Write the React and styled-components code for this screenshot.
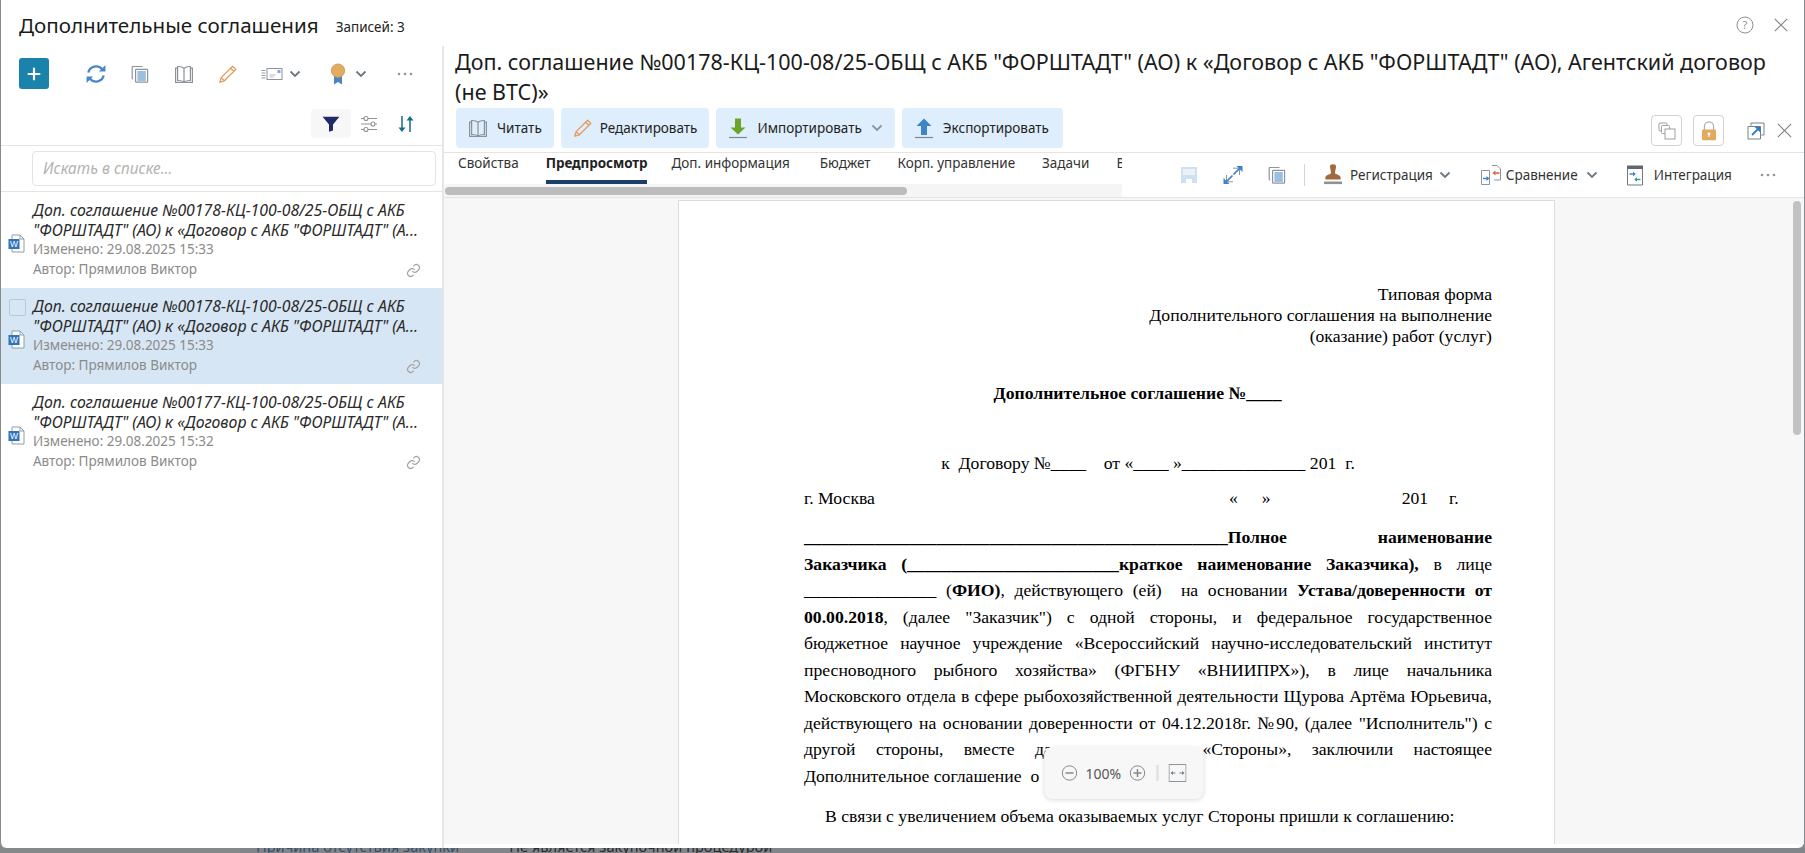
import React from "react";
import styled, { createGlobalStyle } from "styled-components";

const Global = createGlobalStyle`
  html, body { margin: 0; padding: 0; height: 853px; overflow: hidden; background: #888b8d; }
  body { font-family: "Noto Sans", "Open Sans", sans-serif; color: #1f1f1f; }
  #root { height: 853px; overflow: hidden; }
  * { box-sizing: border-box; }
`;

const Shell = styled.div`display: flex; flex-direction: column; width: 1805px; height: 853px; overflow: hidden;`;
const Modal = styled.div`
  display: flex; flex-direction: column; width: 1804px; height: 848px; flex: none;
  background: #fff; border-left: 1px solid #8a8a8a; border-radius: 0 0 6px 6px; overflow: hidden;
`;
const Backdrop = styled.div`display: grid; grid-template-columns: 240px 1fr; height: 5px; overflow: hidden; background: #868989;`;
const BackdropPanel = styled.div`
  grid-column: 2; display: flex; background: #82858a; padding-left: 16px; height: 9px; margin-top: -4px;
  font-size: 14.6px; line-height: 5px; white-space: nowrap; color: #34506a;
`;
const BackdropValue = styled.span`margin-left: 50px; color: #2c2c2c;`;

const Header = styled.header`display: flex; align-items: center; height: 46px; padding: 8px 16px 4px 18px; flex: none;`;
const ListTitle = styled.h1`margin: 0; font-size: 20.6px; font-weight: 400; color: #1b1b1b; white-space: nowrap;`;
const Count = styled.span`margin-left: 17px; padding-top: 3px; font-size: 13.5px; color: #222;`;
const HeaderTools = styled.div`margin-left: auto; display: flex; align-items: center; gap: 20px; color: #8d8f91;`;

const Body = styled.div`display: flex; flex: 1; min-height: 0;`;

const Left = styled.aside`width: 443px; flex: none; border-right: 2px solid #e6e6e6; display: flex; flex-direction: column;`;
const ToolRow = styled.div`display: flex; align-items: center; padding: 12px 0 0 18px; height: 43px;`;
const AddButton = styled.button`
  width: 30px; height: 31px; border: 0; padding: 0; border-radius: 3px; background: #1a82ab; color: #fff;
  display: flex; align-items: center; justify-content: center; margin-right: 25px;
`;
const Slot = styled.div`
  width: ${p => p.$w || 44}px; height: 30px; display: flex; align-items: center; gap: ${p => p.$gap || 0}px;
  justify-content: ${p => p.$start ? "flex-start" : "center"}; padding-left: ${p => p.$pl || 0}px; flex: none;
`;
const FilterRow = styled.div`display: flex; align-items: center; justify-content: flex-end; margin-top: 20px; padding-right: 17px; height: 29px;`;
const FilterBtn = styled.div`width: 40px; height: 29px; border-radius: 4px; background: #f7f7f7; display: flex; align-items: center; justify-content: center;`;
const SearchBar = styled.div`margin-top: 7px; border-top: 1px solid #e4e4e4; border-bottom: 1px solid #e4e4e4; padding: 5px 6px 5px 31px; height: 47px;`;
const SearchInput = styled.div`
  height: 35px; border: 1px solid #e3e3e3; border-radius: 4px; padding: 0 10px; display: flex; align-items: center;
  font-size: 15.4px; font-style: italic; color: #b3b3b3;
`;
const List = styled.div`flex: 1;`;
const Row = styled.div`
  position: relative; height: 96px; padding: 8px 0 0 32px; display: flex; flex-direction: column; white-space: nowrap;
  background: ${p => p.$active ? "#d7e6f4" : "#fff"};
`;
const RowTitle = styled.div`font-size: 15.85px; line-height: 20px; font-style: italic; color: #2a2a2a;`;
const RowMeta = styled.div`font-size: 13.5px; line-height: 19.5px; color: #8b8b8b;`;
const DocBadge = styled.div`position: absolute; left: 7px; top: 42px;`;
const LinkBadge = styled.div`position: absolute; right: 21px; bottom: 10px; color: #a6a6a6; display: flex;`;
const Check = styled.div`position: absolute; left: 8px; top: 11px; width: 17px; height: 17px; border: 1px solid #b9c8d6; border-radius: 2px;`;

const Right = styled.main`flex: 1; min-width: 0; display: flex; flex-direction: column; padding-bottom: 4px;`;
const DocTitle = styled.h2`
  margin: 0; padding: 1px 28px 1px 11px; font-size: 21.5px; line-height: 30px; font-weight: 400; color: #1b1b1b; flex: none;
`;
const Actions = styled.div`display: flex; align-items: flex-start; gap: 7px; height: 45px; padding-left: 12px; border-bottom: 1px solid #e4e4e4; flex: none;`;
const ActionBtn = styled.button`
  height: 40px; border: 0; border-radius: 4px; background: #deeefc; padding: 0 ${p => p.$pr || 14}px 0 12px;
  display: flex; align-items: center; gap: ${p => p.$gap || 9}px; font: inherit; font-size: 13.5px; color: #222; white-space: nowrap;
`;
const SideTools = styled.div`margin-left: auto; padding: 7px 5px 0 0; display: flex; align-items: center;`;
const OutlineBtn = styled.div`
  width: 31px; height: 31px; border: 1px solid #d2d2d2; border-radius: 4px; display: flex; align-items: center; justify-content: center;
  margin-right: ${p => p.$mr}px;
`;

const TabBar = styled.div`display: flex; height: 45px; border-bottom: 1px solid #e4e4e4; flex: none;`;
const TabCol = styled.div`width: 678px; flex: none;`;
const Tabs = styled.div`display: flex; gap: 27px; padding-left: 14px; height: 31px; overflow: hidden;`;
const Tab = styled.div`
  font-size: 13.5px; line-height: 21px; height: 31px; color: #333; white-space: nowrap; flex: none;
  font-weight: ${p => p.$active ? 700 : 400};
  margin-right: ${p => p.$mr || 0}px;
  ${p => p.$active ? "color:#222; border-bottom: 4px solid #1a3f6b; letter-spacing: -0.1px;" : ""}
`;
const HScroll = styled.div`height: 13px; background: #f5f5f5; padding: 3px 0 0 1px;`;
const HThumb = styled.div`width: 462px; height: 8px; border-radius: 4px; background: #bcbcbc;`;
const DocTools = styled.div`flex: 1; display: flex; align-items: center; padding-left: 45px; height: 44px; font-size: 13.5px; color: #333;`;
const Sep = styled.div`width: 1px; height: 22px; background: #d5d5d5; margin: 0 18px 0 5px;`;
const ToolText = styled.span`white-space: nowrap; margin: 0 ${p => p.$mr || 0}px 0 ${p => p.$ml || 0}px;`;

const Viewer = styled.section`position: relative; flex: 1; min-height: 0; overflow: hidden; background: #f7f7f7; padding: 2px 0 0 234px;`;
const VThumb = styled.div`position: absolute; right: 3px; top: 3px; width: 8px; height: 234px; border-radius: 4px; background: #c2c2c2;`;
const Page = styled.article`
  width: 877px; min-height: 800px; background: #fff; border: 1px solid #dcdcdc; padding: 83px 62px 0 125px;
  font-family: "Liberation Serif", "Times New Roman", serif; font-size: 17.67px; color: #000;
`;
const RightLine = styled.div`text-align: right; line-height: 21px;`;
const Heading = styled.div`text-align: center; font-weight: 700; line-height: 21px; margin-top: 36px; padding-right: 21px; white-space: pre;`;
const Center = styled.div`text-align: center; line-height: 21px; margin-top: 49px; white-space: pre;`;
const Place = styled.div`display: flex; line-height: 21px; margin-top: 14px; white-space: pre;`;
const PlaceBit = styled.span`margin-left: ${p => p.$ml}px;`;
const Para = styled.div`margin-top: 15px;`;
const Line = styled.div`line-height: 26.5px; white-space: pre; text-align: justify; text-align-last: ${p => p.$last ? "left" : "justify"};`;
const Indent = styled.div`line-height: 26.5px; margin-top: 14px; padding-left: 21px; white-space: nowrap;`;

const ZoomBar = styled.div`
  position: absolute; left: 50%; bottom: 45px; transform: translateX(-50%); width: 159px; height: 52px;
  background: #f7f7f7; border-radius: 8px; box-shadow: 0 1px 4px rgba(0,0,0,.14); display: flex; align-items: center;
  padding-left: 17px; font-size: 14px; color: #555;
`;
const ZoomValue = styled.span`margin: 0 6px 0 8px; width: 38px; white-space: nowrap;`;
const ZoomSep = styled.div`width: 2px; height: 16px; background: #dedede; margin: 0 10px 0 11px;`;

/* ---------- icons ---------- */
const S = ({ w = 20, h = 20, vb = "0 0 20 20", children, ...r }) => (
  <svg width={w} height={h} viewBox={vb} fill="none" {...r}>{children}</svg>
);
const Plus = () => <S w={18} h={18}><path d="M10 3v14M3 10h14" stroke="#fff" strokeWidth="2.4" /></S>;
const Refresh = () => (
  <S w={22} h={22}>
    <path d="M3 8.6a7.3 7.3 0 0 1 12.6-3" stroke="#4a87c5" strokeWidth="2.1" />
    <path d="M18.6 1.8v6h-6z" fill="#4a87c5" />
    <path d="M17 11.4a7.3 7.3 0 0 1-12.6 3" stroke="#4a87c5" strokeWidth="2.1" />
    <path d="M1.4 18.2v-6h6z" fill="#4a87c5" />
  </S>
);
const CopyDoc = () => (
  <S w={20} h={20}>
    <path d="M12.5 2.5H3a.8.8 0 0 0-.8.8V14a1 1 0 0 0 1 1" stroke="#8c949b" strokeWidth="1.2" />
    <rect x="5.6" y="5.4" width="12" height="12.8" rx=".6" fill="#fff" stroke="#8c949b" strokeWidth="1.2" />
    <path d="M7.4 8h8.4M7.4 10h8.4M7.4 12h8.4M7.4 14h8.4M7.4 16h8.4" stroke="#7ea9d8" strokeWidth="1.3" />
  </S>
);
const Book = () => (
  <S w={20} h={20}>
    <path d="M10 4.3C8.6 3 6 2.4 3.6 2.5v14c2.4-.1 5 .4 6.4 1.6 1.4-1.2 4-1.7 6.4-1.6v-14C14 2.4 11.4 3 10 4.3zM10 4.3v13.6" stroke="#8b9298" strokeWidth="1.2" />
    <path d="M3.6 4.2H1.6v14.2h16.8V4.2h-2" stroke="#8b9298" strokeWidth="1.2" />
  </S>
);
const Pencil = () => (
  <S w={20} h={20}>
    <path d="M14.6 2.2l3.2 3.2L6.4 16.8l-4.6 1.4 1.4-4.6zM12.6 4.2l3.2 3.2M3.2 13.6l3.2 3.2" stroke="#e2995a" strokeWidth="1.3" strokeLinejoin="round" />
  </S>
);
const CardIcon = () => (
  <S w={22} h={20} vb="0 0 22 20">
    <rect x="6" y="4.5" width="15" height="11" stroke="#8c9299" strokeWidth="1" />
    <path d="M.5 6.5h4M.5 9h4M.5 11.5h4M.5 14h4" stroke="#9aa0a6" strokeWidth="1.1" />
    <path d="M8.5 11h6M8.5 13h4" stroke="#b5bac0" strokeWidth="1" />
    <rect x="16.5" y="6" width="3" height="3" fill="#7ea9d8" />
  </S>
);
const Medal = () => (
  <S w={20} h={24} vb="0 0 20 24">
    <path d="M6 12v10.5l4-2.6 4 2.6V12z" fill="#4e86c2" />
    <circle cx="10" cy="8.6" r="6.6" fill="#e3ac63" stroke="#d39c55" />
  </S>
);
const Chev = ({ c = "#6d7780" }) => <S w={12} h={12} vb="0 0 12 12"><path d="M1.5 3.5L6 8l4.5-4.5" stroke={c} strokeWidth="1.8" /></S>;
const Dots = () => (
  <S w={16} h={6} vb="0 0 16 6"><circle cx="2" cy="3" r="1.3" fill="#8e949a" /><circle cx="8" cy="3" r="1.3" fill="#8e949a" /><circle cx="14" cy="3" r="1.3" fill="#8e949a" /></S>
);
const Funnel = () => <S w={18} h={16} vb="0 0 18 16"><path d="M.6.8h16.8L11 8.4V14.6L7 15.8V8.4z" fill="#1f2a66" /></S>;
const Sliders = () => (
  <S w={18} h={18} vb="0 0 18 18">
    <path d="M1 3.5h3M8 3.5h9M1 9h10M15 9h2M1 14.5h3M8 14.5h9" stroke="#8e949a" strokeWidth="1.1" />
    <circle cx="6" cy="3.5" r="2" stroke="#8e949a" strokeWidth="1.1" />
    <circle cx="13" cy="9" r="2" stroke="#8e949a" strokeWidth="1.1" />
    <circle cx="6" cy="14.5" r="2" stroke="#8e949a" strokeWidth="1.1" />
  </S>
);
const Sort = () => (
  <S w={18} h={18} vb="0 0 18 18">
    <path d="M5 1v13" stroke="#176a8c" strokeWidth="1.5" /><path d="M1.5 12.5h7L5 17z" fill="#176a8c" />
    <path d="M13 17V4" stroke="#176a8c" strokeWidth="1.5" /><path d="M9.5 5.5h7L13 1z" fill="#176a8c" />
  </S>
);
const WordDoc = () => (
  <S w={17} h={19} vb="0 0 17 19">
    <path d="M4 1h8l4 4v13H4z" fill="#fff" stroke="#8f9ba8" strokeWidth="1" />
    <path d="M12 1v4h4" stroke="#8f9ba8" strokeWidth="1" />
    <rect x="0.5" y="5" width="11" height="10" fill="#2e74b8" />
    <text x="6" y="13" textAnchor="middle" fontSize="8.5" fontFamily="Liberation Sans, sans-serif" fill="#fff">W</text>
  </S>
);
const LinkIcon = () => (
  <S w={15} h={15} vb="0 0 24 24">
    <path d="M10 13a5 5 0 0 0 7.5.5l3-3a5 5 0 0 0-7-7l-1.7 1.7" stroke="currentColor" strokeWidth="2" />
    <path d="M14 11a5 5 0 0 0-7.5-.5l-3 3a5 5 0 0 0 7 7l1.7-1.7" stroke="currentColor" strokeWidth="2" />
  </S>
);
const Help = () => (
  <S w={18} h={18} vb="0 0 18 18">
    <circle cx="9" cy="9" r="8" stroke="#8f9193" strokeWidth="1" />
    <text x="9" y="13" textAnchor="middle" fontSize="11" fontFamily="Noto Sans, sans-serif" fill="#8f9193">?</text>
  </S>
);
const Close = ({ s = 14 }) => <S w={s} h={s} vb="0 0 14 14"><path d="M.8.8l12.4 12.4M13.2.8L.8 13.2" stroke="#7d8286" strokeWidth="1.1" /></S>;
const ArrowDown = () => (
  <S w={20} h={22} vb="0 0 20 22">
    <path d="M7 1.5h6v9h4.5L10 17.5 2.5 10.5H7z" fill="#69a52b" />
    <path d="M1 20.5h18" stroke="#7b8791" strokeWidth="1.2" />
  </S>
);
const ArrowUp = () => (
  <S w={20} h={22} vb="0 0 20 22">
    <path d="M7 18v-9H2.5L10 1.5 17.5 9H13v9z" fill="#3f84c6" />
    <path d="M1 20.5h18" stroke="#7b8791" strokeWidth="1.2" />
  </S>
);
const Save = () => (
  <S w={18} h={18} vb="0 0 18 18">
    <path d="M1 1h16v16H1z" fill="#cfe0f1" />
    <path d="M3 3h12v6H3z" fill="#e9f1f9" />
    <rect x="6" y="13" width="6" height="4" fill="#fff" />
  </S>
);
const Expand = () => (
  <S w={20} h={20}>
    <path d="M10 3.2h5.5a1 1 0 0 1 1 1V10M10 16.8H4.5a1 1 0 0 1-1-1V10" stroke="#8c949b" strokeWidth="1" />
    <path d="M10.5 9.5l7-7M9.5 10.5l-7 7" stroke="#3c82c4" strokeWidth="1.7" />
    <path d="M13.5 1h6v6zM.5 19v-6l6 6z" fill="#3c82c4" />
  </S>
);
const Stamp = () => (
  <S w={20} h={22} vb="0 0 20 22">
    <path d="M7 2.6a3 2.4 0 0 1 6 0c0 3-1 3.6-1 6.4 0 1.6 5.6 1.4 5.6 4.6v2H2.4v-2c0-3.2 5.6-3 5.6-4.6 0-2.8-1-3.4-1-6.4z" fill="#a26a3c" />
    <path d="M1 17.5h18v2.6H1z" fill="#8c9197" />
  </S>
);
const Compare = () => (
  <S w={22} h={22} vb="0 0 22 22">
    <path d="M1.5 6.5h8v14h-8z" fill="#fff" stroke="#8c949b" />
    <path d="M12 1.5h5l3.5 3.5v11H14" stroke="#8c949b" />
    <path d="M3 14.5h4" stroke="#3c82c4" strokeWidth="1.5" /><path d="M6.5 12l3 2.5-3 2.5z" fill="#3c82c4" />
    <path d="M15.5 9h4" stroke="#dd5a36" strokeWidth="1.5" /><path d="M15.5 6.5l-3 2.5 3 2.5z" fill="#dd5a36" />
  </S>
);
const Integrate = () => (
  <S w={18} h={22} vb="0 0 18 22">
    <path d="M1.5 3h15v18h-15z" fill="#fff" stroke="#70787f" />
    <path d="M1 1.5h16V5H1z" fill="#5f6870" />
    <path d="M3.5 10h4" stroke="#3c82c4" strokeWidth="1.4" /><path d="M7 7.8l2.8 2.2L7 12.2z" fill="#3c82c4" />
    <path d="M10.5 15.5h4" stroke="#2f9e8f" strokeWidth="1.4" /><path d="M11 13.3l-2.8 2.2 2.8 2.2z" fill="#2f9e8f" />
  </S>
);
const Layers = () => (
  <S w={18} h={18} vb="0 0 18 18">
    <rect x="1" y="1" width="8" height="8" rx="1" stroke="#9a9ea2" />
    <rect x="3.5" y="3.5" width="8" height="8" rx="1" fill="#fff" stroke="#9a9ea2" />
    <rect x="7" y="7" width="10" height="10" fill="#fff" stroke="#9a9ea2" />
  </S>
);
const Lock = () => (
  <S w={16} h={20} vb="0 0 16 20">
    <path d="M3.4 9V5.4a4.6 4.6 0 0 1 9.2 0V9" stroke="#a9adb1" strokeWidth="1.2" />
    <rect x="1" y="8.6" width="14" height="10.6" rx="1" fill="#e3a95c" />
    <circle cx="8" cy="13" r="1.4" fill="#fff" /><path d="M7.4 13h1.2v3H7.4z" fill="#fff" />
  </S>
);
const OpenNew = () => (
  <S w={18} h={18} vb="0 0 18 18">
    <path d="M4 3.6V1h13v12h-2.6" stroke="#76808a" />
    <path d="M1 4.5h12.5V17H1z" fill="#fff" stroke="#76808a" />
    <path d="M5 13l6.5-6.5" stroke="#2f7cc4" strokeWidth="1.8" /><path d="M7.5 4.8h6v6z" fill="#2f7cc4" />
  </S>
);
const ZoomOut = () => (
  <S w={16} h={16} vb="0 0 16 16"><circle cx="8" cy="8" r="7.2" stroke="#84888c" /><path d="M4 8h8" stroke="#84888c" strokeWidth="1.5" /></S>
);
const ZoomIn = () => (
  <S w={16} h={16} vb="0 0 16 16"><circle cx="8" cy="8" r="7.2" stroke="#84888c" /><path d="M4 8h8M8 4v8" stroke="#84888c" strokeWidth="1.5" /></S>
);
const Fit = () => (
  <S w={18} h={18} vb="0 0 18 18">
    <rect x=".5" y=".5" width="17" height="17" stroke="#90959a" />
    <path d="M2.5 9H7M11 9h4.5" stroke="#7d8286" /><path d="M2 9l2.5-2v4zM16 9l-2.5-2v4z" fill="#7d8286" />
  </S>
);

const rows = [
  { n: "00178", d: "29.08.2025 15:33" },
  { n: "00178", d: "29.08.2025 15:33", active: true },
  { n: "00177", d: "29.08.2025 15:32" },
];
const under = n => "_".repeat(n);

export default function App() {
  return (
    <>
      <Global />
      <Shell>
        <Modal>
          <Header>
            <ListTitle>Дополнительные соглашения</ListTitle>
            <Count>Записей: 3</Count>
            <HeaderTools><Help /><Close /></HeaderTools>
          </Header>
          <Body>
            <Left>
              <ToolRow>
                <AddButton aria-label="Добавить"><Plus /></AddButton>
                <Slot><Refresh /></Slot>
                <Slot><CopyDoc /></Slot>
                <Slot><Book /></Slot>
                <Slot><Pencil /></Slot>
                <Slot $w={66} $start $pl={11} $gap={6}><CardIcon /><Chev /></Slot>
                <Slot $w={67} $start $pl={12} $gap={7}><Medal /><Chev /></Slot>
                <Slot><Dots /></Slot>
              </ToolRow>
              <FilterRow>
                <FilterBtn><Funnel /></FilterBtn>
                <Slot $w={36}><Sliders /></Slot>
                <Slot $w={38}><Sort /></Slot>
              </FilterRow>
              <SearchBar><SearchInput>Искать в списке...</SearchInput></SearchBar>
              <List>
                {rows.map((r, i) => (
                  <Row key={i} $active={r.active}>
                    {r.active && <Check />}
                    <DocBadge><WordDoc /></DocBadge>
                    <RowTitle>
                      Доп. соглашение №{r.n}-КЦ-100-08/25-ОБЩ с АКБ<br />
                      "ФОРШТАДТ" (АО) к «Договор с АКБ "ФОРШТАДТ" (А...
                    </RowTitle>
                    <RowMeta>Изменено: {r.d}</RowMeta>
                    <RowMeta>Автор: Прямилов Виктор</RowMeta>
                    <LinkBadge><LinkIcon /></LinkBadge>
                  </Row>
                ))}
              </List>
            </Left>
            <Right>
              <DocTitle>
                Доп. соглашение №00178-КЦ-100-08/25-ОБЩ с АКБ "ФОРШТАДТ" (АО) к «Договор с АКБ "ФОРШТАДТ" (АО), Агентский договор (не ВТС)»
              </DocTitle>
              <Actions>
                <ActionBtn $pr={12}><Book />Читать</ActionBtn>
                <ActionBtn $gap={7} $pr={12}><Pencil />Редактировать</ActionBtn>
                <ActionBtn $pr={12}><ArrowDown />Импортировать<Chev c="#8a949c" /></ActionBtn>
                <ActionBtn><ArrowUp />Экспортировать</ActionBtn>
                <SideTools>
                  <OutlineBtn $mr={11}><Layers /></OutlineBtn>
                  <OutlineBtn $mr={19}><Lock /></OutlineBtn>
                  <Slot $w={26}><OpenNew /></Slot>
                  <Slot $w={30}><Close s={15} /></Slot>
                </SideTools>
              </Actions>
              <TabBar>
                <TabCol>
                  <Tabs>
                    <Tab>Свойства</Tab>
                    <Tab $active $mr={-3}>Предпросмотр</Tab>
                    <Tab $mr={3}>Доп. информация</Tab>
                    <Tab>Бюджет</Tab>
                    <Tab>Корп. управление</Tab>
                    <Tab>Задачи</Tab>
                    <Tab>В</Tab>
                  </Tabs>
                  <HScroll><HThumb /></HScroll>
                </TabCol>
                <DocTools>
                  <Slot><Save /></Slot>
                  <Slot><Expand /></Slot>
                  <Slot><CopyDoc /></Slot>
                  <Sep />
                  <Stamp />
                  <ToolText $ml={7} $mr={6}>Регистрация</ToolText><Chev />
                  <Slot $w={51} $start $pl={29}><Compare /></Slot>
                  <ToolText $ml={4} $mr={8}>Сравнение</ToolText><Chev />
                  <Slot $w={46} $start $pl={28}><Integrate /></Slot>
                  <ToolText $ml={10}>Интеграция</ToolText>
                  <Slot $w={60} $start $pl={28}><Dots /></Slot>
                </DocTools>
              </TabBar>
              <Viewer>
                <Page>
                  <RightLine>Типовая форма</RightLine>
                  <RightLine>Дополнительного соглашения на выполнение</RightLine>
                  <RightLine>(оказание) работ (услуг)</RightLine>
                  <Heading>Дополнительное соглашение №{under(4)}</Heading>
                  <Center>{`к  Договору №${under(4)}    от «${under(4)} »${under(14)} 201  г.`}</Center>
                  <Place>
                    <span>г. Москва</span>
                    <PlaceBit $ml={354}>«</PlaceBit>
                    <PlaceBit $ml={24}>»</PlaceBit>
                    <PlaceBit $ml={131}>201</PlaceBit>
                    <PlaceBit $ml={21}>г.</PlaceBit>
                  </Place>
                  <Para>
                    <Line><b>{under(48)}Полное наименование</b></Line>
                    <Line><b>Заказчика ({under(24)}краткое наименование Заказчика),</b> в лице</Line>
                    <Line>{under(15)} (<b>ФИО)</b>, действующего (ей)  на основании <b>Устава/доверенности от</b></Line>
                    <Line><b>00.00.2018</b>, (далее "Заказчик") с одной стороны, и федеральное государственное</Line>
                    <Line>бюджетное научное учреждение «Всероссийский научно-исследовательский институт</Line>
                    <Line>пресноводного рыбного хозяйства» (ФГБНУ «ВНИИПРХ»), в лице начальника</Line>
                    <Line>Московского отдела в сфере рыбохозяйственной деятельности Щурова Артёма Юрьевича,</Line>
                    <Line>действующего на основании доверенности от 04.12.2018г. №90, (далее "Исполнитель") с</Line>
                    <Line>другой стороны, вместе далее именуемые «Стороны», заключили настоящее</Line>
                    <Line $last>{"Дополнительное соглашение  о    нижеследующем:"}</Line>
                  </Para>
                  <Indent>В связи с увеличением объема оказываемых услуг Стороны пришли к соглашению:</Indent>
                </Page>
                <VThumb />
                <ZoomBar>
                  <ZoomOut />
                  <ZoomValue>100%</ZoomValue>
                  <ZoomIn />
                  <ZoomSep />
                  <Fit />
                </ZoomBar>
              </Viewer>
            </Right>
          </Body>
        </Modal>
        <Backdrop>
          <BackdropPanel>Причина отсутствия закупки<BackdropValue>Не является закупочной процедурой</BackdropValue></BackdropPanel>
        </Backdrop>
      </Shell>
    </>
  );
}
